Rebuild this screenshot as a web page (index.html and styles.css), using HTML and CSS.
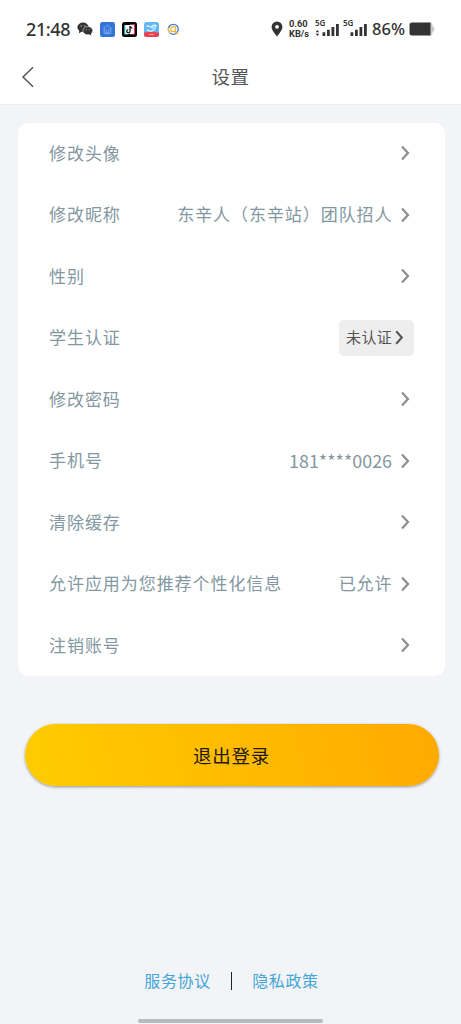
FILE: index.html
```html
<!DOCTYPE html>
<html lang="zh-CN">
<head>
<meta charset="UTF-8">
<meta name="viewport" content="width=device-width, initial-scale=1">
<title>设置</title>
<link rel="stylesheet" href="styles.css">
</head>
<body>
<svg width="0" height="0" class="defs">
  <symbol id="chev" viewBox="0 0 10 16"><path d="M2 1.400 8 8 2 14.600" fill="none" stroke="currentColor" stroke-width="2.200"/></symbol>
</svg>
<div class="screen">
  <div class="status">
    <span class="clock">21:48</span>
    <div class="apps">
      <svg width="16" height="14" viewBox="0 0 16 14"><ellipse cx="6" cy="5.2" rx="5.6" ry="4.7" fill="#333"/><path d="M2.3 8 2 11.2 5.5 9.3z" fill="#333"/><ellipse cx="10.8" cy="8.7" rx="4.9" ry="4.1" fill="#333" stroke="#fff" stroke-width=".5"/><path d="m12 12 2.2 1.5-.2-3z" fill="#333"/><g fill="#ccc"><circle cx="4.2" cy="4" r=".65"/><circle cx="7.8" cy="4" r=".65"/><circle cx="9.3" cy="7.8" r=".5"/><circle cx="12.3" cy="7.8" r=".5"/></g></svg>
      <svg width="15" height="15" viewBox="0 0 15 15"><rect width="15" height="15" rx="2.3" fill="#3274d8"/><path d="M3.5 6.3 7.4 3.2l3.9 3.1M4.2 6v5.4h6.5V6M6.1 7.2v2.3M8.7 7.2v2.3M6 10.2h3" fill="none" stroke="#9fc4f8" stroke-width=".7"/></svg>
      <svg width="15" height="15" viewBox="0 0 15 15"><rect width="15" height="15" rx="2.5" fill="#070707"/><path d="M2.3 3h4v9.5h-4z" fill="#42dfe2"/><path d="M8 2.2h5v10.3H8z" fill="#f23865"/><rect x="3.4" y="3" width="8.5" height="9" rx="1" fill="#fff"/><path d="M8 4v5.3a1.6 1.6 0 1 1-1.7-1.6M8 4.2c.3 1.3 1.1 1.9 2.3 2" fill="none" stroke="#111" stroke-width="1.3"/></svg>
      <svg width="15" height="15" viewBox="0 0 15 15"><rect width="15" height="15" rx="2.5" fill="#62b7f3"/><path d="M0 10.700q7-2 15 0v1.800a2.500 2.500 0 0 1-2.500 2.500h-10A2.500 2.500 0 0 1 0 12.500z" fill="#ed3f4d"/><path d="M2.500 4.500c2-2 3.500 1.500 6 .5M3 7.500c2.500 2.500 6 2 8-1 1-2-1.500-4-3-2.500-1 1 .5 2.500 1.500 1.500M10.500 2.500l2 1.500" fill="none" stroke="#e5f7ff" stroke-width="1.200"/><path d="M5 12.500h5" stroke="#ff9d96" stroke-width="1"/></svg>
      <svg width="13" height="13" viewBox="0 0 13 13"><circle cx="6.300" cy="6.300" r="5" fill="none" stroke="#3d76dc" stroke-width="1.300"/><path d="M2.800 9.800A5 5 0 0 1 1.500 5" fill="none" stroke="#f5c344" stroke-width="1.400"/><circle cx="6.300" cy="6.200" r="2.500" fill="#fff" stroke="#f0b52e" stroke-width="1.300"/><path d="m7.800 7.800 3 3.200" stroke="#f0b52e" stroke-width="1.700"/></svg>
    </div>
    <div class="signals">
      <svg width="12" height="16" viewBox="0 0 12 16"><path d="M6 .5a5.400 5.400 0 0 0-5.400 5.400C.6 9.500 6 15.300 6 15.300s5.400-5.800 5.400-9.400A5.400 5.400 0 0 0 6 .5z" fill="#333"/><circle cx="6" cy="5.800" r="1.900" fill="#fff"/></svg>
      <div class="speed"><span>0.60</span><span>KB/s</span></div>
      <div class="cell"><span class="gen">5G</span><svg width="24" height="16" viewBox="0 0 24 16"><path d="M.6 11.200 2.400 9l1.800 2.200zM.6 12.700l1.800 2.200 1.800-2.200z" fill="#333"/><path d="M7.500 11.200h2.800V15H7.500zM12 8.700h2.800V15H12zM16.500 6h2.800v9h-2.800zM21 3h2.800v12H21z" fill="#333"/></svg></div>
      <div class="cell second"><span class="gen">5G</span><svg width="24" height="16" viewBox="0 0 24 16"><path d="M7.500 11.200h2.800V15H7.500zM12 8.700h2.800V15H12zM16.500 6h2.800v9h-2.800zM21 3h2.800v12H21z" fill="#333"/></svg></div>
      <span class="percent">86%</span>
      <svg width="26" height="14" viewBox="0 0 26 14"><path d="M18 .5h2.500A2.500 2.500 0 0 1 23.500 3v1.200c2.600.5 2.600 5.100 0 5.600V11a2.500 2.500 0 0 1-2.500 2.500H18z" fill="#c8c8c8"/><path d="M3 .5h18.500v13H3A2.500 2.500 0 0 1 .5 11V3A2.500 2.500 0 0 1 3 .5z" fill="#333"/></svg>
    </div>
  </div>
  <header class="nav">
    <svg width="14" height="22" viewBox="0 0 14 22"><path d="M12 1.200 2 11l10 9.800" fill="none" stroke="#555" stroke-width="1.500"/></svg>
    <h1 class="title">设置</h1>
  </header>
  <main class="body">
    <div class="card">
      <div class="row"><span class="label">修改头像</span><svg class="chev"><use href="#chev"/></svg></div>
      <div class="row"><span class="label">修改昵称</span><span class="value">东辛人（东辛站）团队招人</span><svg class="chev"><use href="#chev"/></svg></div>
      <div class="row"><span class="label">性别</span><svg class="chev"><use href="#chev"/></svg></div>
      <div class="row"><span class="label">学生认证</span><span class="tag">未认证<svg class="chev"><use href="#chev"/></svg></span></div>
      <div class="row"><span class="label">修改密码</span><svg class="chev"><use href="#chev"/></svg></div>
      <div class="row"><span class="label">手机号</span><span class="value phone">181****0026</span><svg class="chev"><use href="#chev"/></svg></div>
      <div class="row"><span class="label">清除缓存</span><svg class="chev"><use href="#chev"/></svg></div>
      <div class="row"><span class="label">允许应用为您推荐个性化信息</span><span class="value">已允许</span><svg class="chev"><use href="#chev"/></svg></div>
      <div class="row"><span class="label">注销账号</span><svg class="chev"><use href="#chev"/></svg></div>
    </div>
    <button class="logout">退出登录</button>
    <footer class="links"><a>服务协议</a><span class="sep"></span><a>隐私政策</a></footer>
    <div class="homebar"></div>
  </main>
</div>
</body>
</html>
```
FILE: styles.css
```css
* { box-sizing: border-box; }
body { margin: 0; background: #f2f4f7; font-family: "Noto Sans CJK SC", sans-serif; }
.defs { display: block; }
.screen { height: 1024px; display: flex; flex-direction: column; overflow: hidden; }
.screen svg { display: block; flex: none; }
.status { height: 50px; padding: 8px 26px 0 26px; background: #fff; display: flex; align-items: center; color: #333; }
.clock { width: 50.500px; font: 500 18px/24px "Noto Sans", sans-serif; letter-spacing: -.4px; white-space: nowrap; }
.apps { display: flex; align-items: center; gap: 7.300px; }
.signals { margin-left: auto; display: flex; align-items: center; }
.speed { width: 26px; margin-left: 6px; display: flex; flex-direction: column; font: 700 9.300px/10px Roboto, sans-serif; white-space: nowrap; }
.cell { position: relative; }
.cell.second { margin-left: 4px; }
.gen { position: absolute; left: 0; top: -2px; font: 600 8px/8px "Noto Sans", sans-serif; }
.percent { width: 37px; margin-left: 5px; font: 500 16.500px/24px "Noto Sans", sans-serif; white-space: nowrap; }
.nav { height: 55px; padding: 0 21px 1px; background: #fff; border-bottom: 1px solid #e9ebee; display: grid; grid-template-columns: 14px 1fr 14px; align-items: center; }
.title { margin: 0; padding-bottom: 2px; text-align: center; font-size: 18.500px; line-height: 28px; font-weight: 400; letter-spacing: .5px; color: #555; }
.body { flex: 1; padding: 18px 16px 0 18px; display: flex; flex-direction: column; }
.card { height: 553px; border-radius: 10px; background: #fff; display: grid; grid-template-rows: repeat(9, 1fr); }
.row { padding: 0 35px 0 31px; display: flex; align-items: center; font-size: 17px; line-height: 24px; letter-spacing: .94px; color: #82979f; white-space: nowrap; }
.label { margin-right: auto; padding-bottom: 1.500px; }
.value { margin-right: 7.500px; padding-bottom: 1.500px; }
.phone { font-size: 17.900px; letter-spacing: 0; margin-right: 8px; padding-bottom: 1px; }
.chev { width: 10px; height: 16px; margin-bottom: .5px; color: #8e8e8e; }
.tag { height: 36px; width: 75px; margin-right: -4px; padding: 0 0 2px 7px; border-radius: 5px; background: #eee; color: #555; display: flex; align-items: center; gap: 2px; font-size: 15px; letter-spacing: .4px; }
.tag .chev { width: 10px; height: 15px; margin-bottom: 0; color: #555; }
.logout { height: 62px; margin: 48px 6.500px 0; padding: 0; border: 0; border-radius: 31px; background: linear-gradient(75deg, #ffca00 5%, #ffbb00 52%, #ffa900); box-shadow: 0 1px 3px rgba(0, 0, 0, .4); color: #21180a; font: 400 18.500px/28px "Noto Sans CJK SC", sans-serif; letter-spacing: .7px; }
.links { margin-top: auto; height: 24px; display: flex; align-items: center; justify-content: center; font-size: 16px; letter-spacing: .6px; color: #45a5d8; }
.links a { padding-bottom: 2px; }
.sep { width: 1.500px; height: 18px; margin: 0 20px; background: #222; }
.homebar { width: 185px; height: 4px; margin: 26px auto 1px 120px; border-radius: 2px; background: #b9babc; }
```
